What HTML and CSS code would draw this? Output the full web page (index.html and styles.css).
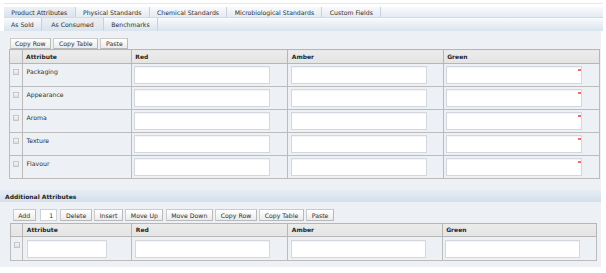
FILE: index.html
```html
<!DOCTYPE html>
<html>
<head>
<meta charset="utf-8">
<link rel="stylesheet" href="styles.css">
</head>
<body>
<div class="topline"></div>
<div class="tabs tabs-main">
  <div class="tab active">Product Attributes</div>
  <div class="tab">Physical Standards</div>
  <div class="tab">Chemical Standards</div>
  <div class="tab">Microbiological Standards</div>
  <div class="tab">Custom Fields</div>
</div>
<div class="tabs tabs-sub">
  <div class="tab">As Sold</div>
  <div class="tab active">As Consumed</div>
  <div class="tab">Benchmarks</div>
</div>
<div class="panel">
  <div class="toolbar">
    <div class="btn">Copy Row</div>
    <div class="btn">Copy Table</div>
    <div class="btn">Paste</div>
  </div>
  <table class="grid grid-main">
    <colgroup>
      <col class="c-check"><col class="c-attr"><col class="c-red"><col class="c-amber"><col class="c-green">
    </colgroup>
    <thead>
      <tr><th></th><th>Attribute</th><th>Red</th><th>Amber</th><th>Green</th></tr>
    </thead>
    <tbody>
      <tr><td><span class="chk"></span></td><td class="label">Packaging</td><td><span class="inp"></span></td><td><span class="inp"></span></td><td><span class="inp req"></span></td></tr>
      <tr><td><span class="chk"></span></td><td class="label">Appearance</td><td><span class="inp"></span></td><td><span class="inp"></span></td><td><span class="inp req"></span></td></tr>
      <tr><td><span class="chk"></span></td><td class="label">Aroma</td><td><span class="inp"></span></td><td><span class="inp"></span></td><td><span class="inp req"></span></td></tr>
      <tr><td><span class="chk"></span></td><td class="label">Texture</td><td><span class="inp"></span></td><td><span class="inp"></span></td><td><span class="inp req"></span></td></tr>
      <tr><td><span class="chk"></span></td><td class="label">Flavour</td><td><span class="inp"></span></td><td><span class="inp"></span></td><td><span class="inp req"></span></td></tr>
    </tbody>
  </table>
  <div class="section-head">Additional Attributes</div>
  <div class="toolbar toolbar-add">
    <div class="btn">Add</div>
    <div class="num">1</div>
    <div class="btn">Delete</div>
    <div class="btn">Insert</div>
    <div class="btn">Move Up</div>
    <div class="btn">Move Down</div>
    <div class="btn">Copy Row</div>
    <div class="btn">Copy Table</div>
    <div class="btn">Paste</div>
  </div>
  <table class="grid grid-add">
    <colgroup>
      <col class="a-check"><col class="a-attr"><col class="a-red"><col class="a-amber"><col class="a-green">
    </colgroup>
    <thead>
      <tr><th></th><th>Attribute</th><th>Red</th><th>Amber</th><th>Green</th></tr>
    </thead>
    <tbody>
      <tr><td><span class="chk"></span></td><td><span class="inp inp-attr"></span></td><td><span class="inp"></span></td><td><span class="inp"></span></td><td><span class="inp"></span></td></tr>
    </tbody>
  </table>
</div>
</body>
</html>
```
FILE: styles.css
```css
* { box-sizing: border-box; }
body {
  margin: 0;
  background: #fff;
  font-family: "DejaVu Sans", Verdana, sans-serif;
  font-size: 6.2px;
  color: #2e2e2e;
}
.topline {
  height: 4px;
  border-bottom: 1px solid #e3e8ed;
  margin: 0 3px 3px 4px;
}
.tabs {
  display: flex;
  margin: 0 3px 0 4px;
}
.tabs-main {
  height: 11px;
  background: linear-gradient(#f8fafc, #e4ebf2);
  border-bottom: 1px solid #d3dce6;
}
.tabs-sub {
  height: 13px;
  background: linear-gradient(#f9fbfd, #d9e3ee);
}
.tab {
  display: flex;
  align-items: center;
  padding: 0 7.3px;
  border-right: 1px solid #c8d2dc;
  white-space: nowrap;
}
.tabs-sub .tab {
  padding: 0 7px;
}
.tabs-sub .tab.active {
  padding: 0 9.5px;
}
.tab.active {
  background: linear-gradient(#edf1f5, #dbe3ec);
}
.panel {
  background: #edf1f6;
  margin-right: 5px;
  padding: 6.5px 0 6px;
}
.toolbar {
  display: flex;
  gap: 2.4px;
  margin-left: 9.5px;
  height: 11.8px;
}
.btn {
  display: flex;
  align-items: center;
  padding: 0 4.5px;
  border: 1px solid #cbcbcb;
  border-right-color: #b9b9b9;
  border-bottom-color: #b9b9b9;
  background: linear-gradient(#ffffff, #ebebeb);
  white-space: nowrap;
}
.num {
  width: 17.5px;
  display: flex;
  align-items: center;
  justify-content: flex-end;
  padding-right: 3px;
  background: #fff;
  border: 1px solid #cdd2d8;
  margin: 0 1px 0 1.5px;
}
table.grid {
  border-collapse: collapse;
  table-layout: fixed;
}
.grid-main {
  margin: 0 0 0 9px;
  width: 590px;
}
.grid-add {
  margin: 1.5px 0 0 10px;
  width: 586px;
}
.c-check { width: 12.5px; }
.c-attr { width: 109.3px; }
.c-red { width: 156.5px; }
.c-amber { width: 155.4px; }
.c-green { width: 156.3px; }
.a-check { width: 12.3px; }
.a-attr { width: 109px; }
.a-red { width: 156px; }
.a-amber { width: 154.4px; }
.a-green { width: 154.3px; }
.grid th {
  height: 13.5px;
  background: linear-gradient(#ececec, #e4e4e4);
  border: 1px solid #b6b6b6;
  text-align: left;
  font-weight: bold;
  font-size: 6px;
  color: #262626;
  padding: 0 3.5px;
}
.grid td {
  border: 1px solid #bcbcbc;
  vertical-align: top;
  padding: 2.5px 2.5px 0;
  background: #edf1f6;
}
.grid-main td { height: 23px; }
.grid-add td { height: 23.5px; }
.grid td.label {
  padding: 4px 4px 0;
}
.chk {
  display: block;
  width: 6.2px;
  height: 6.2px;
  margin: 2.5px auto 0;
  border: 1px solid #c6c6c6;
  background: linear-gradient(#f6f6f6, #dedede);
}
.inp {
  display: block;
  position: relative;
  width: 136px;
  height: 18px;
  background: #fff;
  border: 1px solid #d3d8de;
  box-shadow: inset 0 1px 1px rgba(0, 0, 0, 0.05);
}
.grid-add .inp { width: 135px; }
.grid-add .inp-attr { width: 80.7px; margin-left: 1px; }
.req::after {
  content: "";
  position: absolute;
  right: 0.5px;
  top: 1.5px;
  width: 2.5px;
  height: 2px;
  background: #f26a6a;
}
.section-head {
  margin-top: 11.5px;
  height: 12px;
  padding-left: 5px;
  display: flex;
  align-items: center;
  font-weight: bold;
  font-size: 6px;
  color: #262626;
  background: linear-gradient(#e6edf4, #d4dfea);
}
.toolbar-add {
  margin-top: 7px;
  margin-left: 12.7px;
}
```
